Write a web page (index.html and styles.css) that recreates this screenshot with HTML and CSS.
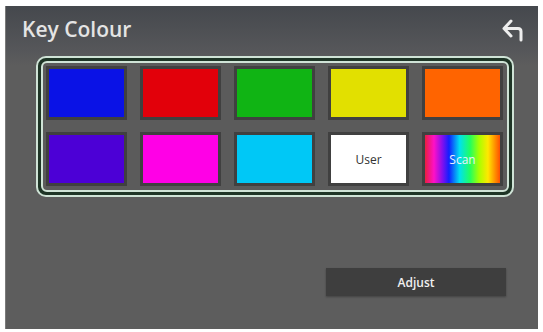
FILE: index.html
```html
<!DOCTYPE html>
<html lang="en">
<head>
  <meta charset="UTF-8">
  <title>Key Colour</title>
  <link rel="stylesheet" href="styles.css">
</head>
<body>
  <div class="screen">
    <div class="header">
      <h1>Key Colour</h1>
      <svg class="back" width="26" height="26" viewBox="0 0 26 26">
        <path d="M10 2 L3 9.5 L10 17 M3 9.5 H17 Q20 9.5 20 12.5 V21" fill="none" stroke="#eeeeee" stroke-width="3" stroke-linecap="round" stroke-linejoin="round"/>
      </svg>
    </div>

    <div class="frame">
      <div class="grid">
        <div class="slot"><div class="swatch blue"></div></div>
        <div class="slot"><div class="swatch red"></div></div>
        <div class="slot"><div class="swatch green"></div></div>
        <div class="slot"><div class="swatch yellow"></div></div>
        <div class="slot"><div class="swatch orange"></div></div>
        <div class="slot"><div class="swatch purple"></div></div>
        <div class="slot"><div class="swatch magenta"></div></div>
        <div class="slot"><div class="swatch cyan"></div></div>
        <div class="slot"><div class="swatch user">User</div></div>
        <div class="slot"><div class="swatch scan">Scan</div></div>
      </div>
    </div>

    <div class="button">Adjust</div>
  </div>
</body>
</html>
```

FILE: styles.css
```css
body {
  margin: 0;
  background-color: #fff;
  font-family: "Open Sans", "Noto Sans", sans-serif;
}

.screen {
  margin: 6px 5px 0 5px;
  width: 533px;
  height: 323px;
  background: linear-gradient(#45484d 0px, #56575a 45px, #5d5d5d 60px);
  border-left: 1px solid #7a7a7a;
  box-sizing: border-box;
  display: flex;
  flex-direction: column;
}

.header {
  height: 50px;
  display: flex;
  align-items: center;
  justify-content: space-between;
  padding: 0 11px 4px 16px;
  box-sizing: border-box;
}

.header h1 {
  margin: 0;
  font-size: 21px;
  font-weight: 600;
  color: #e4e4e4;
}

.back {
  margin-top: 6px;
}

.frame {
  margin-left: 30px;
  width: 478px;
  border: 2px solid #cfe3d6;
  border-radius: 10px;
  background-color: #1e3526;
  padding: 3px;
  box-sizing: border-box;
}

.grid {
  border: 2px solid #cfe3d6;
  border-radius: 6px;
  background-color: #5b5b5b;
  padding: 3px 2px 4px 3px;
  display: grid;
  grid-template-columns: repeat(5, 81px);
  grid-auto-rows: 54px;
  column-gap: 13px;
  row-gap: 12px;
}

.slot {
  background-color: #404040;
  padding: 3px;
  box-sizing: border-box;
}

.swatch {
  width: 100%;
  height: 100%;
  display: flex;
  align-items: center;
  justify-content: center;
  font-size: 12px;
}

.blue { background-color: #0a12e6; }
.red { background-color: #e2000a; }
.green { background-color: #10b414; }
.yellow { background-color: #e2e000; }
.orange { background-color: #ff6400; }
.purple { background-color: #4c00d6; }
.magenta { background-color: #ff00e6; }
.cyan { background-color: #00c8f6; }

.user {
  background-color: #fff;
  color: #333;
}

.scan {
  color: #f0f0ff;
  background: linear-gradient(90deg, #e82040 0%, #ff10c8 12%, #7a10f0 24%, #1020ff 32%, #00e0f0 46%, #20ff60 60%, #a8ff00 72%, #ffe800 84%, #ff5000 100%);
}

.button {
  margin-top: auto;
  margin-bottom: 33px;
  margin-right: 32px;
  align-self: flex-end;
  width: 180px;
  height: 28px;
  background-color: #3e3e3e;
  color: #f0f0f0;
  font-size: 12px;
  font-weight: 600;
  display: flex;
  align-items: center;
  justify-content: center;
  box-shadow: 0 1px 2px rgba(0, 0, 0, 0.3);
}
```
